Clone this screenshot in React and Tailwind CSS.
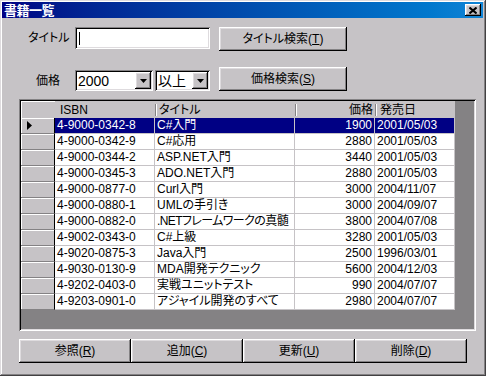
import React from 'react';

const ROWS = [
  ['4-9000-0342-8', 'C#入門', '1900', '2001/05/03'],
  ['4-9000-0342-9', 'C#応用', '2880', '2001/05/03'],
  ['4-9000-0344-2', 'ASP.NET入門', '3440', '2001/05/03'],
  ['4-9000-0345-3', 'ADO.NET入門', '2880', '2001/05/03'],
  ['4-9000-0877-0', 'Curl入門', '3000', '2004/11/07'],
  ['4-9000-0880-1', 'UMLの手引き', '3000', '2004/09/07'],
  ['4-9000-0882-0', '.NETフレームワークの真髄', '3800', '2004/07/08'],
  ['4-9002-0343-0', 'C#上級', '3280', '2001/05/03'],
  ['4-9020-0875-3', 'Java入門', '2500', '1996/03/01'],
  ['4-9030-0130-9', 'MDA開発テクニック', '5600', '2004/12/03'],
  ['4-9202-0403-0', '実戦ユニットテスト', '990', '2004/07/07'],
  ['4-9203-0901-0', 'アジャイル開発のすべて', '2980', '2004/07/07'],
];

const raised =
  'shadow-[inset_-1px_-1px_0_#000000,inset_1px_1px_0_#ffffff,inset_-2px_-2px_0_#848284,inset_2px_2px_0_#dedbde]';
const sunken =
  'shadow-[inset_1px_1px_0_#848284,inset_-1px_-1px_0_#ffffff,inset_2px_2px_0_#000000,inset_-2px_-2px_0_#dedbde]';

function Button({ label, hot, className = '' }) {
  return (
    <button className={`flex items-center justify-center bg-[#c6c3c6] text-black text-[12px] leading-none ${raised} ${className}`}>
      <span>
        {label}(<u>{hot}</u>)
      </span>
    </button>
  );
}

function DropArrow() {
  return (
    <div className={`w-[16px] h-[17px] bg-[#c6c3c6] flex items-center justify-center ${raised}`}>
      <svg width="7" height="4" viewBox="0 0 7 4">
        <polygon points="0,0 7,0 3.5,4" fill="#000" />
      </svg>
    </div>
  );
}

function Combo({ value, width }) {
  return (
    <div className={`${width} h-[21px] bg-white flex items-center justify-between pl-[3px] pr-[2px] text-[14px] ${sunken}`}>
      <span className="leading-none">{value}</span>
      <DropArrow />
    </div>
  );
}

function HeaderSep() {
  return <span className="w-[2px] h-[12px] border-l border-l-[#848284] border-r border-r-white shrink-0" />;
}

export default function App() {
  return (
    <div className="w-[486px] h-[376px] bg-[#c6c3c6] p-[2px] flex flex-col font-['Liberation_Sans','Noto_Sans_CJK_JP',sans-serif] [font-feature-settings:'palt'] text-black shadow-[inset_-1px_-1px_0_#424142,inset_1px_1px_0_#dedbde,inset_-2px_-2px_0_#848284,inset_2px_2px_0_#ffffff]">
      {/* タイトルバー */}
      <div className="h-[16px] mr-[1px] bg-gradient-to-r from-[#000084] to-[#1084d6] flex items-center justify-between pl-[2px] pr-[2px]">
        <span className="text-white text-[13px] font-bold leading-none tracking-[-0.5px]">書籍一覧</span>
        <div className={`w-[16px] h-[12px] bg-[#c6c3c6] flex items-center justify-center ${raised}`}>
          <svg width="8" height="7" viewBox="0 0 8 7">
            <path d="M0.5 0.5 L7.5 6.5 M7.5 0.5 L0.5 6.5" stroke="#000" strokeWidth="2" />
          </svg>
        </div>
      </div>

      <div className="flex flex-col pl-[17px]">
        {/* タイトル検索 */}
        <div className="mt-[9px] flex items-start">
          <div className="w-[56px] h-[22px] flex items-center pl-[9px] text-[12px]">タイトル</div>
          <div className={`w-[135px] h-[22px] bg-white flex items-center pl-[4px] ${sunken}`}>
            <span className="w-px h-[13px] bg-black" />
          </div>
          <Button label="タイトル検索" hot="T" className="ml-[9px] w-[128px] h-[24px]" />
        </div>

        {/* 価格検索 */}
        <div className="mt-[16px] flex items-start">
          <div className="w-[56px] h-[24px] pt-[3px] flex items-center pl-[17px] text-[12px]">価格</div>
          <div className="mt-[3px] flex gap-[2px]">
            <Combo value="2000" width="w-[78px]" />
            <Combo value="以上" width="w-[55px]" />
          </div>
          <Button label="価格検索" hot="S" className="ml-[9px] w-[128px] h-[24px]" />
        </div>

        {/* 一覧グリッド */}
        <div className={`mt-[8px] w-[457px] h-[232px] bg-[#848284] p-[2px] flex flex-col text-[12px] ${sunken}`}>
          <div className="h-[17px] flex items-center bg-[#c6c3c6] w-[434px]">
            <div className="w-[34px] h-full shadow-[inset_1px_1px_0_#ffffff]" />
            <div className="w-[100px] pl-[5px]">ISBN</div>
            <div className="w-[140px] flex items-center">
              <HeaderSep />
              <span className="ml-[2px]">タイトル</span>
            </div>
            <div className="w-[80px] flex items-center">
              <HeaderSep />
              <span className="ml-auto pr-[2px]">価格</span>
            </div>
            <div className="w-[80px] flex items-center">
              <HeaderSep />
              <span className="ml-[3px]">発売日</span>
            </div>
          </div>

          {ROWS.map((r, i) => {
            const sel = i === 0;
            const cell = `h-[16px] border-r border-b border-[#c6c3c6] leading-[15px] whitespace-nowrap overflow-hidden ${sel ? 'bg-[#000084] text-white' : 'bg-white'}`;
            const tight = r[1].length > 12 ? 'tracking-[-0.6px]' : '';
            return (
              <div key={r[0]} className="flex h-[16px] w-[434px]">
                <div className="w-[34px] h-[16px] bg-[#c6c3c6] border-r border-r-black border-b border-b-[#848284] shadow-[inset_1px_1px_0_#ffffff] flex items-center pl-[6px]">
                  {sel && (
                    <svg width="5" height="9" viewBox="0 0 5 9">
                      <polygon points="0,0 5,4.5 0,9" fill="#000" />
                    </svg>
                  )}
                </div>
                <div className={`w-[100px] pl-[2px] ${cell}`}>{r[0]}</div>
                <div className={`w-[140px] pl-[2px] ${tight} ${cell}`}>{r[1]}</div>
                <div className={`w-[80px] pr-[2px] text-right ${cell}`}>{r[2]}</div>
                <div className={`w-[80px] pl-[2px] ${cell}`}>{r[3]}</div>
              </div>
            );
          })}
        </div>

        {/* 操作ボタン */}
        <div className="mt-[8px] flex">
          <Button label="参照" hot="R" className="w-[112px] h-[24px]" />
          <Button label="追加" hot="C" className="w-[112px] h-[24px]" />
          <Button label="更新" hot="U" className="w-[112px] h-[24px]" />
          <Button label="削除" hot="D" className="w-[112px] h-[24px]" />
        </div>
      </div>
    </div>
  );
}
